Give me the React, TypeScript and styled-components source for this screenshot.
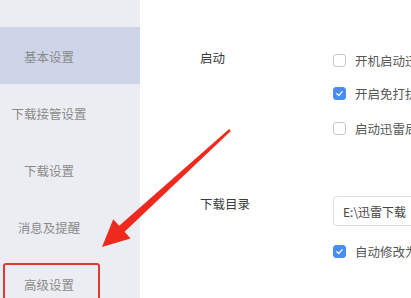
import React from "react"
import styled, { createGlobalStyle } from "styled-components"

const GlobalStyle = createGlobalStyle`
    html, body {
        margin: 0;
        padding: 0;
        width: 411px;
        height: 298px;
        overflow: hidden;
        background: #fff;
    }
    body {
        font-family: "Noto Sans CJK SC", "Noto Sans", sans-serif;
    }
`

const Page = styled.div`
    position: relative;
    width: 411px;
    height: 298px;
    display: flex;
    overflow: hidden;
`

const Sidebar = styled.div`
    width: 140px;
    flex-shrink: 0;
    background-color: #ecedf2;
    padding-top: 27px;
    display: flex;
    flex-direction: column;
`

const NavItem = styled.div<{ $active?: boolean; $marked?: boolean }>`
    position: relative;
    height: 57px;
    flex-shrink: 0;
    padding: 2px 42px 0 0;
    box-sizing: border-box;
    display: flex;
    align-items: center;
    justify-content: center;
    font-size: 12.5px;
    color: #8a8a8a;
    background-color: ${p => (p.$active ? "#cfd5e8" : "transparent")};

    &::after {
        content: "";
        display: ${p => (p.$marked ? "block" : "none")};
        position: absolute;
        left: 3px;
        top: 8px;
        width: 97px;
        height: 60px;
        box-sizing: border-box;
        border: 2px solid #e8372d;
        border-radius: 3px;
    }
`

const Content = styled.div`
    flex: 1;
    background: #fff;
    padding: 0 0 0 60px;
    display: flex;
    flex-direction: column;
`

const Section = styled.div<{ $top: number }>`
    display: flex;
    margin-top: ${p => p.$top}px;
`

const Label = styled.div`
    width: 133px;
    flex-shrink: 0;
    font-size: 12.5px;
    color: #3a3a3a;
    line-height: 16px;
`

const Controls = styled.div`
    display: flex;
    flex-direction: column;
    min-width: 0;
`

const CheckRow = styled.div<{ $gap?: number }>`
    display: flex;
    align-items: center;
    height: 20px;
    margin-top: ${p => p.$gap ?? 0}px;
    white-space: nowrap;
    font-size: 12.5px;
    color: #555;
`

const Box = styled.span<{ $checked?: boolean }>`
    width: 13px;
    height: 13px;
    box-sizing: border-box;
    border-radius: 3px;
    margin-right: 9px;
    flex-shrink: 0;
    display: flex;
    align-items: center;
    justify-content: center;
    border: 1px solid ${p => (p.$checked ? "#4a8cf6" : "#c9c9c9")};
    background-color: ${p => (p.$checked ? "#4a8cf6" : "#fff")};
`

const PathInput = styled.div`
    width: 200px;
    height: 30px;
    box-sizing: border-box;
    border: 1px solid #dddddd;
    border-radius: 4px;
    padding-left: 9px;
    display: flex;
    align-items: center;
    font-size: 12px;
    color: #444;
    white-space: nowrap;
`

const Overlay = styled.svg`
    position: absolute;
    left: 0;
    top: 0;
    width: 411px;
    height: 298px;
    pointer-events: none;
`

const Check = ({ checked }: { checked?: boolean }) => (
    <Box $checked={checked}>
        {checked && (
            <svg width="9" height="9" viewBox="0 0 10 10">
                <path d="M2 5.2 L4.2 7.3 L8 3" fill="none" stroke="#fff" strokeWidth="1.4" strokeLinecap="round" strokeLinejoin="round" />
            </svg>
        )}
    </Box>
)

const navs = ["基本设置", "下载接管设置", "下载设置", "消息及提醒", "高级设置"]

export default function App() {
    return (
        <>
            <GlobalStyle />
            <Page>
                <Sidebar>
                    {navs.map((n, i) => (
                        <NavItem key={n} $active={i === 0} $marked={i === 4}>
                            {n}
                        </NavItem>
                    ))}
                </Sidebar>
                <Content>
                    <Section $top={50}>
                        <Label>启动</Label>
                        <Controls>
                            <CheckRow>
                                <Check />
                                开机启动迅雷
                            </CheckRow>
                            <CheckRow $gap={13}>
                                <Check checked />
                                开启免打扰模式
                            </CheckRow>
                            <CheckRow $gap={15}>
                                <Check />
                                启动迅雷后自动开始未完成的任务
                            </CheckRow>
                        </Controls>
                    </Section>
                    <Section $top={58}>
                        <Label>下载目录</Label>
                        <Controls>
                            <PathInput>E:\迅雷下载</PathInput>
                            <CheckRow $gap={15}>
                                <Check checked />
                                自动修改为上次使用的目录
                            </CheckRow>
                        </Controls>
                    </Section>
                </Content>
                <Overlay viewBox="0 0 411 298">
                    <polygon
                        fill="#ee2a1f"
                        points="230.8,130.9 124.6,231.8 130.6,238.4 102,247 113.2,219.3 119.2,225.8 229.2,129.1"
                    />
                </Overlay>
            </Page>
        </>
    )
}
